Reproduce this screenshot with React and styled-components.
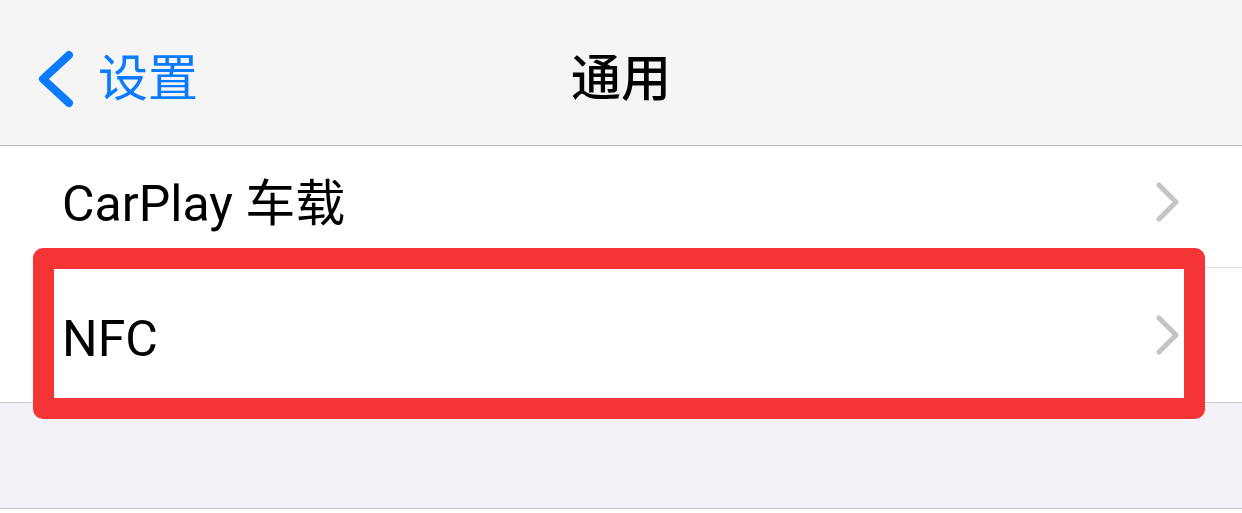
import React from "react";
import styled, { createGlobalStyle } from "styled-components";

const Global = createGlobalStyle`
  html, body { margin: 0; padding: 0; background: #ffffff; }
  body { font-family: Roboto, "Noto Sans CJK SC", sans-serif; -webkit-font-smoothing: antialiased; }
`;

const Page = styled.div`
  width: 1242px;
  height: 513px;
  overflow: hidden;
  display: flex;
  flex-direction: column;
`;

const NavBar = styled.header`
  flex: none;
  background: #f5f5f5;
  border-bottom: 1px solid #b9b9b9;
  display: grid;
  grid-template-columns: 1fr auto 1fr;
  align-items: center;
  padding-top: 12px;
  height: 133px;
`;

const BackButton = styled.div`
  display: flex;
  align-items: center;
  gap: 22px;
  padding-left: 36px;
  color: #0a7aff;
  font-size: 50px;
  line-height: 1;
`;

const Title = styled.div`
  font-size: 50px;
  font-weight: 500;
  color: #000;
  line-height: 1;
`;

const List = styled.section`
  background: #fff;
  border-bottom: 1px solid #c8c7cc;
  flex: none;
`;

const Row = styled.div`
  position: relative;
  height: ${(p) => p.$height}px;
  display: flex;
  align-items: center;
  padding: ${(p) => p.$padTop}px 61px ${(p) => p.$padBottom}px 62px;
  box-sizing: border-box;
  ${(p) =>
    p.$separator &&
    `
    &::after {
      content: "";
      position: absolute;
      left: 62px;
      right: 0;
      bottom: 0;
      height: 1px;
      background: #dcdcdf;
    }
  `}
`;

const Label = styled.span`
  flex: 1;
  font-size: 50px;
  color: #000;
  line-height: 1;
  padding-top: ${(p) => p.$nudge || 0}px;
`;

const Highlight = styled.div`
  position: absolute;
  left: 33px;
  right: 37px;
  top: -20px;
  bottom: -17px;
  border: 21px solid #f53436;
  border-radius: 10px;
  pointer-events: none;
`;

const Footer = styled.div`
  height: 105px;
  flex: none;
  background: #f2f2f7;
  border-bottom: 1px solid #c8c7cc;
`;

const BackChevron = () => (
  <svg width="40" height="60" viewBox="0 0 40 60">
    <polyline
      points="33,6 7,30 33,54"
      fill="none"
      stroke="#0a7aff"
      strokeWidth="8"
      strokeLinecap="round"
      strokeLinejoin="round"
    />
  </svg>
);

const Chevron = () => (
  <svg width="25" height="40" viewBox="0 0 25 40">
    <polyline
      points="3,3 20,20 3,37"
      fill="none"
      stroke="#c4c4c7"
      strokeWidth="5"
      strokeLinecap="round"
      strokeLinejoin="round"
    />
  </svg>
);

export default function App() {
  return (
    <Page>
      <Global />
      <NavBar>
        <BackButton>
          <BackChevron />
          <span>设置</span>
        </BackButton>
        <Title>通用</Title>
        <div />
      </NavBar>
      <List>
        <Row $height={122} $padTop={0} $padBottom={10} $separator>
          <Label $nudge={4}>CarPlay 车载</Label>
          <Chevron />
        </Row>
        <Row $height={134} $padTop={0} $padBottom={0}>
          <Label $nudge={8}>NFC</Label>
          <Chevron />
          <Highlight />
        </Row>
      </List>
      <Footer />
    </Page>
  );
}
